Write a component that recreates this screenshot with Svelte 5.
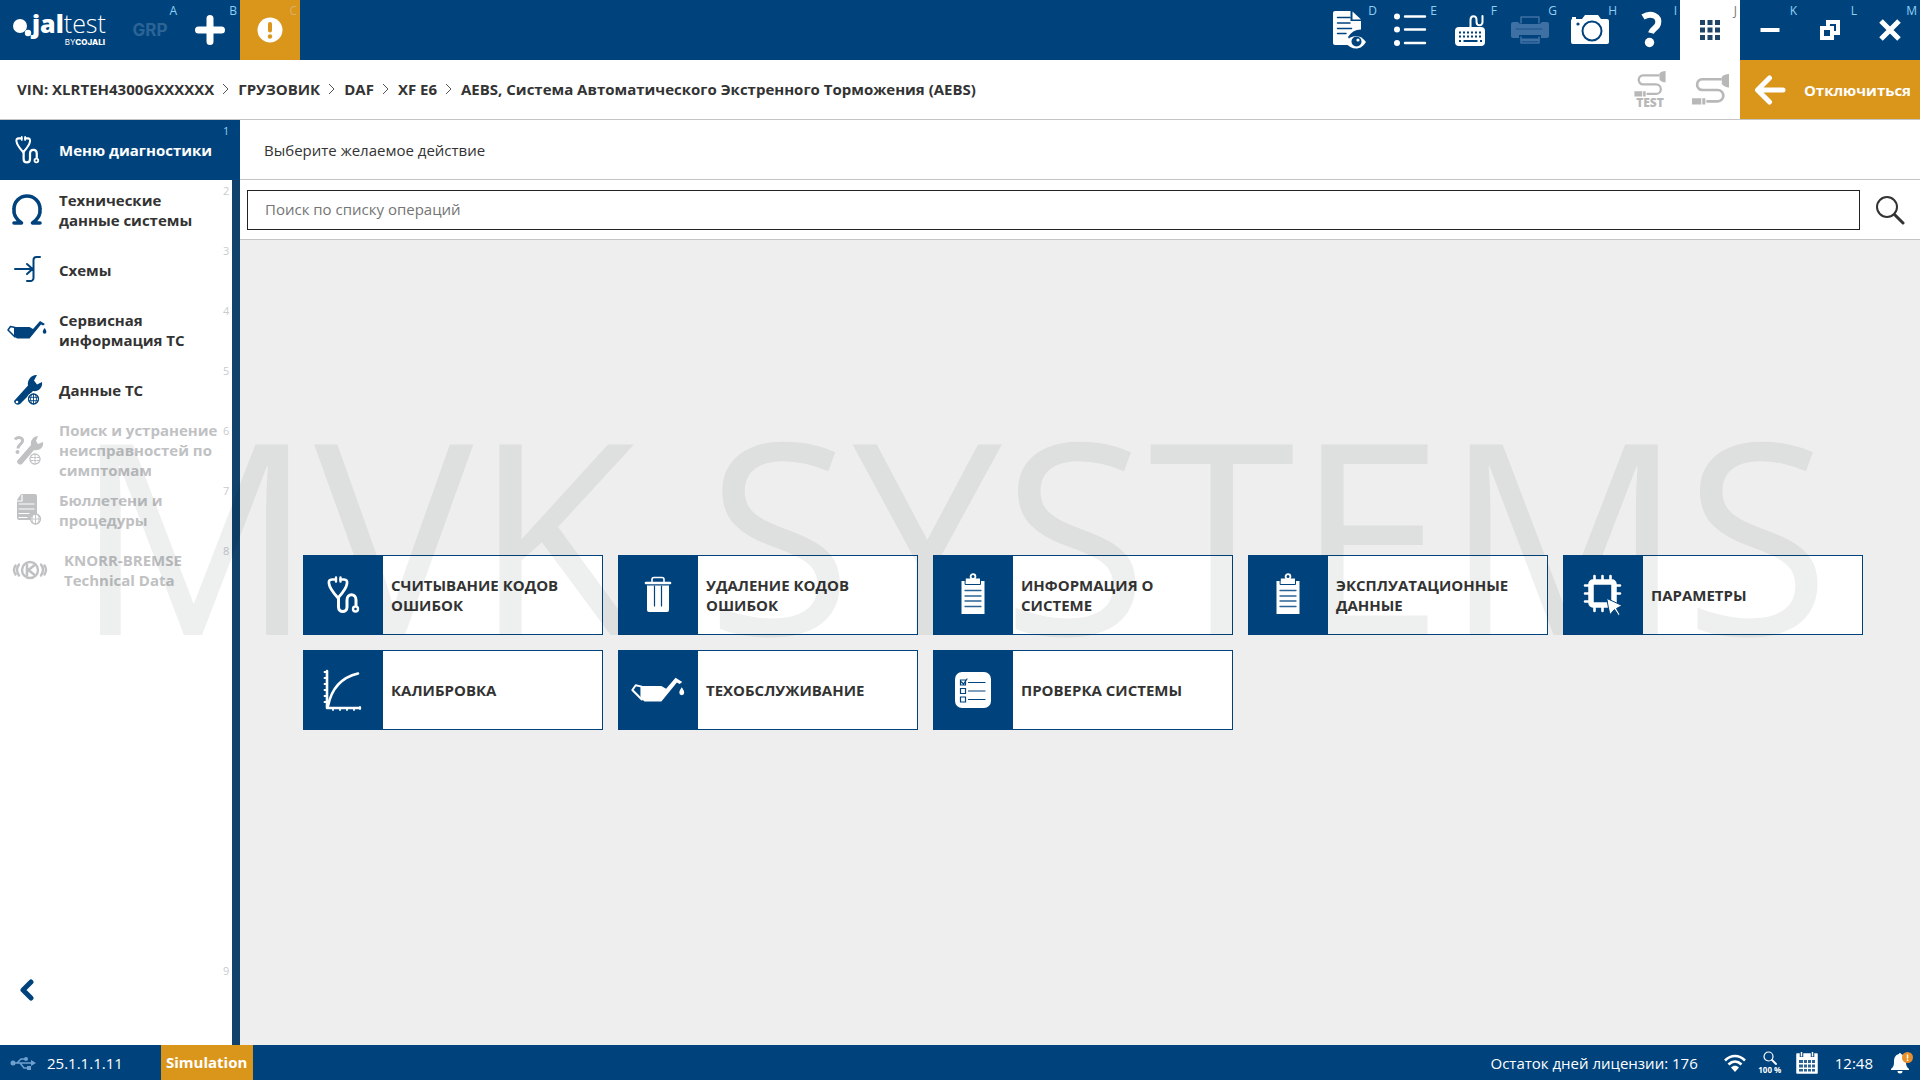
<script>
  const leftTools = [
    { key: 'A', icon: 'grp', label: 'GRP', disabled: true },
    { key: 'B', icon: 'plus', label: 'Добавить' },
    { key: 'C', icon: 'alert', label: 'Предупреждения', tone: 'orange' }
  ];
  const rightTools = [
    { key: 'D', icon: 'report', label: 'Просмотр отчёта' },
    { key: 'E', icon: 'list', label: 'Список' },
    { key: 'F', icon: 'keyboard', label: 'Клавиатура' },
    { key: 'G', icon: 'printer', label: 'Печать', disabled: true },
    { key: 'H', icon: 'camera', label: 'Снимок экрана' },
    { key: 'I', icon: 'help', label: 'Справка' },
    { key: 'J', icon: 'apps', label: 'Приложения', tone: 'white' },
    { key: 'K', icon: 'minimize', label: 'Свернуть' },
    { key: 'L', icon: 'restore', label: 'Восстановить' },
    { key: 'M', icon: 'close', label: 'Закрыть' }
  ];
  const crumbs = [
    'VIN: XLRTEH4300GXXXXXX',
    'ГРУЗОВИК',
    'DAF',
    'XF E6',
    'AEBS, Система Автоматического Экстренного Торможения (AEBS)'
  ];
  const menu = [
    { icon: 'stethoscope', text: 'Меню диагностики', active: true },
    { icon: 'omega', text: 'Технические данные системы' },
    { icon: 'scheme', text: 'Схемы' },
    { icon: 'oil', text: 'Сервисная информация ТС' },
    { icon: 'wrench', text: 'Данные ТС' },
    { icon: 'symptom', text: 'Поиск и устранение неисправностей по симптомам', disabled: true },
    { icon: 'bulletin', text: 'Бюллетени и процедуры', disabled: true },
    { icon: 'knorr', text: 'KNORR-BREMSE Technical Data', disabled: true, indent: true }
  ];
  const actions = [
    { icon: 'stethoscope', text: 'СЧИТЫВАНИЕ КОДОВ ОШИБОК' },
    { icon: 'trash', text: 'УДАЛЕНИЕ КОДОВ ОШИБОК' },
    { icon: 'clipboard', text: 'ИНФОРМАЦИЯ О СИСТЕМЕ' },
    { icon: 'clipboard', text: 'ЭКСПЛУАТАЦИОННЫЕ ДАННЫЕ' },
    { icon: 'chip', text: 'ПАРАМЕТРЫ' },
    { icon: 'curve', text: 'КАЛИБРОВКА' },
    { icon: 'oil', text: 'ТЕХОБСЛУЖИВАНИЕ' },
    { icon: 'checklist', text: 'ПРОВЕРКА СИСТЕМЫ' }
  ];
</script>

{#snippet glyph(name)}
  <svg class="glyph {name}" viewBox="0 0 40 40" aria-hidden="true" fill="none" stroke="currentColor" stroke-linecap="round" stroke-linejoin="round">
    {#if name === 'plus'}
      <path d="M20 8.500v23M8.500 20h23" stroke-width="7" />
    {:else if name === 'alert'}
      <circle cx="20" cy="20" r="12.500" fill="currentColor" stroke="none" />
      <path d="M20 14v6.500" stroke="#da951b" stroke-width="4" />
      <circle cx="20" cy="26.500" r="2.200" fill="#da951b" stroke="none" />
    {:else if name === 'report'}
      <path d="M5 1h15.500v10H31v8.500c-6 0-10 3-13 7.500 2 4 4 6 7 8H5a2 2 0 0 1-2-2V3a2 2 0 0 1 2-2Z" fill="currentColor" stroke="none" />
      <path d="M22.500 1.500 31 9.500h-8.500Z" fill="currentColor" stroke="none" />
      <path d="M7.500 7.500H20M7.500 13H20M7.500 18.500h14M7.500 23.500H16" stroke="#00437c" stroke-width="1.500" />
      <path d="M15.500 32.500c3-4.500 6.500-6.500 10.500-6.500s7 2 10 6c-3 4.500-6 6.500-10 6.500s-7.500-2-10.500-6Z" fill="currentColor" stroke="none" />
      <circle cx="26.500" cy="31.500" r="5" fill="#00437c" stroke="none" />
      <circle cx="28" cy="30" r="1.600" fill="currentColor" stroke="none" />
    {:else if name === 'list'}
      <g fill="currentColor" stroke="none"><circle cx="7" cy="6.500" r="3" /><circle cx="7" cy="19.500" r="3" /><circle cx="7" cy="33" r="3" /></g>
      <path d="M15 6.500h20M15 19.500h20M15 33h20" stroke-width="2.400" />
    {:else if name === 'keyboard'}
      <rect x="5" y="17" width="30" height="19" rx="4" fill="currentColor" stroke="none" />
      <path d="M20.500 17v-7c0-5 6-5 6-.500v2c0 5 6 5 6 .500V6" stroke-width="2" />
      <path d="M9 22.500h23M9 26.500h23" stroke="#00437c" stroke-width="2" stroke-dasharray="2 2" stroke-linecap="butt" />
      <path d="M9 31h2M13.500 31h14M30 31h2" stroke="#00437c" stroke-width="2" stroke-linecap="butt" />
    {:else if name === 'printer'}
      <path d="M11 13V7h18v6M11 27v6h18v-6" stroke-width="1.500" />
      <path d="M3 12h5l2 2h20l2-2h5a2 2 0 0 1 2 2v12a2 2 0 0 1-2 2h-6v-3H9v3H3a2 2 0 0 1-2-2V14a2 2 0 0 1 2-2Z" fill="currentColor" stroke="none" />
      <path d="M12 30h16" stroke-width="3" /><path d="M6 19h26" stroke="#1b528a" stroke-width="1" />
    {:else if name === 'camera'}
      <path d="M2 9V7h4v2h6l3-4h13l3 4h6a2 2 0 0 1 2 2v21a2 2 0 0 1-2 2H3a2 2 0 0 1-2-2V11a2 2 0 0 1 1-2Z" fill="currentColor" stroke="none" />
      <circle cx="22" cy="21" r="9.500" stroke="#00437c" stroke-width="2" />
      <circle cx="8" cy="14" r="1.600" fill="#00437c" stroke="none" />
    {:else if name === 'help'}
      <path d="M13 7c8-5 17-1 15 7-1 4-6 5-7 9" stroke-width="6" stroke-linecap="butt" />
      <circle cx="19.500" cy="32.500" r="4.700" fill="currentColor" stroke="none" />
    {:else if name === 'apps'}
      <path d="M10 10h5v5h-5ZM17.500 10h5v5h-5ZM25 10h5v5h-5ZM10 17.500h5v5h-5ZM17.500 17.500h5v5h-5ZM25 17.500h5v5h-5ZM10 25h5v5h-5ZM17.500 25h5v5h-5ZM25 25h5v5h-5Z" fill="currentColor" stroke="none" />
    {:else if name === 'minimize'}
      <path d="M10.500 20h19" stroke-width="4" stroke-linecap="butt" />
    {:else if name === 'restore'}
      <g stroke-linejoin="miter" stroke-width="4"><path d="M18 15v-3h10v11h-4" /><path d="M12 18h10v10H12Z" /></g>
    {:else if name === 'close'}
      <path d="M11 11l18 18M29 11 11 29" stroke-width="5" stroke-linecap="butt" />
    {:else if name === 'stethoscope'}
      <path d="M12.500 4.500H9c-2.500 0-3.500 1.500-3 4 .5 5 4.500 9.500 9 14.500 4.500-5 8.500-9.500 9-14.500.4-2.500-.6-4-3-4h-3.500" stroke-width="2.700" />
      <path d="M13 2.500v4M17.500 2.500v4" stroke-width="2.400" />
      <path d="M15.500 23v9c0 6 8.500 6 8.500 0v-7c0-7 9-7 9 0v5" stroke-width="3" />
      <circle cx="32.500" cy="34" r="2.500" stroke-width="2.400" />
    {:else if name === 'omega'}
      <path d="M7 33h7.500c-7-5-8-10-7.500-14a13 13 0 0 1 26 0c.5 4-.5 9-7.500 14H33" stroke-width="3.600" />
    {:else if name === 'scheme'}
      <path d="M33 7h-3.500a3 3 0 0 0-3 3v18a3 3 0 0 1-3 3H20M8 19h16M20 14l5.500 5-5.500 5" stroke-width="2" />
    {:else if name === 'oil'}
      <path d="M7 17h15.500l3.500 2L33 11l5 3-2 1.500-2-1L22.500 28.600H10L7 26Z" fill="currentColor" stroke="none" />
      <path d="M8 17.500 3.500 16.500 1 20l7 7" stroke-width="1.500" />
      <path d="M37.600 18c-1 1.500-1.800 2.700-1.800 4a1.800 1.800 0 0 0 3.600 0c0-1.300-.8-2.500-1.800-4Z" fill="currentColor" stroke="none" />
    {:else if name === 'wrench'}
      <path d="M7 31 21 15.500c-1-5 3-11 9-10.500l-3 5.500 3 4 5-2.500c1 6-4 10-9 9L13 34a3.800 3.800 0 0 1-6-3Z" fill="currentColor" stroke="none" />
      <circle cx="10" cy="32" r="1.300" fill="#fff" stroke="none" />
      <circle cx="26.500" cy="29" r="6.500" fill="#fff" stroke="none" />
      <circle cx="26.500" cy="29" r="5" stroke-width="1.300" />
      <path d="M22 27.300h9M22 30.700h9M26.500 24v10M25 24.500c-2 3-2 6 0 9M28 24.500c2 3 2 6 0 9" stroke-width=".9" />
    {:else if name === 'symptom'}
      <path d="M10 31 24 15c-1-5 3-9 7-9l-2 5 2 3 5-2c1 6-4 9-9 8L15 34a3.200 3.200 0 0 1-5-3Z" fill="currentColor" stroke="none" />
      <path d="M8 9.500c2.500-3.500 8-2 7.500 1.500 0 3-4.500 3.500-4.500 7.500" stroke-width="3" stroke-linecap="butt" />
      <circle cx="10.500" cy="22" r="2" fill="currentColor" stroke="none" />
      <circle cx="28" cy="29" r="5" stroke-width="1.300" stroke-dasharray="2 1" />
      <path d="M24 27.500h8M24 30.500h8M28 24v10" stroke-width="1" stroke-dasharray="2 1" />
    {:else if name === 'bulletin'}
      <path d="M14 4h14a2 2 0 0 1 2 2v18c-5 0-7 2-7 6H12a2 2 0 0 1-2-2V10Z" fill="currentColor" stroke="none" />
      <path d="M15 5v6h-5M12 14h15M12 19h15M12 23.500h10M12 27.500h8" stroke="#fff" stroke-width="1.200" />
      <circle cx="28.500" cy="29" r="5" stroke-width="1.300" />
      <path d="M23.500 29h10M28.500 24v10M26 25c-1.500 3-1.500 5 0 8M31 25c1.500 3 1.500 5 0 8" stroke-width=".9" />
    {:else if name === 'knorr'}
      <circle cx="20" cy="20" r="8" stroke-width="2.400" />
      <path d="M17 15v10M24 15.500 18.500 20l5.500 4.500" stroke-width="2.600" />
      <path d="M9 14.500c-2.500 3.500-2.500 7.500 0 11M5.500 15.500c-2 3-2 6 0 9M31 14.500c2.500 3.500 2.500 7.500 0 11M34.500 15.500c2 3 2 6 0 9" stroke-width="2.400" />
    {:else if name === 'trash'}
      <path d="M14 6.500V4.500a2 2 0 0 1 2-2h8a2 2 0 0 1 2 2v2" stroke-width="1.600" />
      <path d="M8 8h24" stroke-width="2.600" />
      <path d="M9 10.500h22V35a2 2 0 0 1-2 2H11a2 2 0 0 1-2-2Z" fill="currentColor" stroke="none" />
      <path d="M16.500 11v20M23.500 11v20" stroke="#00437c" stroke-width="1.200" />
    {:else if name === 'clipboard'}
      <path d="M8.500 6h23v33h-23Z" fill="currentColor" stroke="none" />
      <path d="M12.500 3h15v6.500h-15Z" fill="currentColor" stroke="#00437c" stroke-width="1" />
      <circle cx="20" cy="1.500" r="2.400" stroke-width="1.800" />
      <path d="M12 15.500h16M12 21h16M12 26h16M12 31.500h16" stroke="#2b6394" stroke-width="1.300" />
    {:else if name === 'chip'}
      <rect x="8" y="7" width="23" height="23" rx="2" stroke-width="5.500" />
      <path d="M11.500 1v4M19.500 1v4M27.500 1v4M11.500 32v4M19.500 32v4M2 10.500h4M2 18.500h4M2 26.500h4M33 10.500h4M33 18.500h4" stroke-width="2.600" />
      <path d="M24 23.500l15 7-5.500 3 3.500 6-1.500 1-4-6-4.500 5Z" fill="currentColor" stroke="#00437c" stroke-width="1" />
    {:else if name === 'curve'}
      <path d="M4 1v37h33" stroke-width="2.600" />
      <path d="M1.500 2h2M1.500 8h2M1.500 14h2M1.500 20h2M1.500 26h2M1.500 32h2M10 38v2M17 38v2M24 38v2M31 38v2M37 37v2" stroke-width="1.800" />
      <path d="M5 36C8 21 16 8 35 3.500" stroke-width="2.600" />
    {:else if name === 'checklist'}
      <rect x="2" y="2" width="36" height="36" rx="7" fill="currentColor" stroke="none" />
      <g stroke="#00437c" stroke-width="1.200" stroke-linejoin="miter"><path d="M7.500 10h5v5h-5ZM7.500 18.500h5v5h-5ZM7.500 27h5v5h-5ZM8.500 12l2 2 3.500-5" /><path d="M15.500 12.500H32M15.500 21H32M15.500 29.500H32" /></g>
    {/if}
  </svg>
{/snippet}

{#snippet tool(item)}
  <button class="tool {item.tone ?? ''}" class:off={item.disabled} aria-label={item.label} aria-keyshortcuts={item.key}>
    {#if item.icon === 'grp'}<b class="grp">GRP</b>{:else}{@render glyph(item.icon)}{/if}
    <span class="key">{item.key}</span>
  </button>
{/snippet}

{#snippet cable()}
  <path d="M29 5H10a5 5 0 0 0-5 5.500a5 5 0 0 0 5 5h15a5.500 5.500 0 0 1 0 11H14" stroke="currentColor" stroke-width="2.600" fill="none" />
  <path d="M29 2.500c2-1.500 4-2.500 7-2.500v13c-3 0-5-1-7-3ZM0 23.500h9v6H0ZM10 23.500h3v6h-3Z" fill="currentColor" />
{/snippet}

<div class="app">
  <header class="topbar">
    <svg class="logo" viewBox="0 0 120 60" role="img" aria-label="jaltest by cojali">
      <circle cx="20" cy="26" r="7" /><circle cx="28" cy="33" r="3.200" />
      <text x="32" y="33" class="brand"><tspan class="bold">jal</tspan><tspan class="light">test</tspan></text>
      <text x="105" y="45" class="by" text-anchor="end">BY<tspan class="bold">COJALI</tspan></text>
    </svg>
    {#each leftTools as item}{@render tool(item)}{/each}
    <div class="spacer"></div>
    {#each rightTools as item}{@render tool(item)}{/each}
  </header>

  <div class="pathbar">
    <nav class="crumbs" aria-label="Путь">
      {#each crumbs as crumb, i}
        {#if i > 0}
          <svg class="sep" viewBox="0 0 8 12" aria-hidden="true"><path d="M1 1l5 5-5 5" fill="none" stroke="#555" /></svg>
        {/if}
        <span>{crumb}</span>
      {/each}
    </nav>
    <button class="link-tool column" aria-label="Проверка связи">
      <svg viewBox="0 0 36 30" width="32" height="26">{@render cable()}</svg>
      <b class="test">TEST</b>
    </button>
    <button class="link-tool" aria-label="Связь">
      <svg viewBox="0 0 36 30" width="37" height="31">{@render cable()}</svg>
    </button>
    <button class="disconnect">
      <svg viewBox="0 0 32 30" width="32" height="30" aria-hidden="true"><path d="M29 15H4M15.500 3 3.500 15l12 12" fill="none" stroke="#fff" stroke-width="5" stroke-linecap="round" stroke-linejoin="round" /></svg>
      <span>Отключиться</span>
    </button>
  </div>

  <div class="body">
    <aside class="sidebar">
      <nav aria-label="Разделы">
        {#each menu as item, i}
          <button class="item" class:active={item.active} class:muted={item.disabled} class:indent={item.indent}>
            <span class="pic">{@render glyph(item.icon)}</span>
            <span class="name">{item.text}</span>
            <span class="num">{i + 1}</span>
          </button>
        {/each}
      </nav>
      <button class="item collapse" aria-label="Свернуть меню">
        <svg viewBox="0 0 14 22" width="14" height="22" aria-hidden="true"><path d="M11 3 3 11l8 8" fill="none" stroke="#00437c" stroke-width="5" stroke-linecap="round" stroke-linejoin="round" /></svg>
        <span class="num">9</span>
      </button>
    </aside>

    <main>
      <h1>Выберите желаемое действие</h1>
      <form class="search" role="search">
        <input type="search" placeholder="Поиск по списку операций" aria-label="Поиск по списку операций" />
        <button type="button" aria-label="Найти">
          <svg viewBox="0 0 30 30" width="30" height="30" fill="none" stroke="#333" stroke-linecap="round"><circle cx="12" cy="12" r="10" stroke-width="2" /><path d="M19.500 19.500 28 28" stroke-width="3" /></svg>
        </button>
      </form>
      <section class="stage">
        <div class="cards">
          {#each actions as action}
            <button class="card">
              <span class="tile">{@render glyph(action.icon)}</span>
              <span class="caption">{action.text}</span>
            </button>
          {/each}
        </div>
      </section>
    </main>
  </div>

  <footer>
    <svg class="usb" viewBox="0 0 26 14" width="26" height="14" aria-hidden="true"><g fill="none" stroke="#6fa0cf" stroke-width="1.500"><path d="M3 7h20M7 7l4-4h4M10 7l4 5h4" /></g><g fill="#6fa0cf"><circle cx="3" cy="7" r="2.500" /><circle cx="16" cy="3" r="2" /><path d="M17 10h4v4h-4ZM21 4l5 3-5 3Z" /></g></svg>
    <span class="version">25.1.1.1.11</span>
    <strong class="mode">Simulation</strong>
    <div class="spacer"></div>
    <span class="license">Остаток дней лицензии: 176</span>
    <svg class="wifi" viewBox="0 0 22 18" width="22" height="18" aria-hidden="true"><g fill="none" stroke="#fff" stroke-width="2.600"><path d="M1 6.500C7 .5 15 .5 21 6.500M4.500 10.500c4-4 9-4 13 0" /></g><path d="M7 13.500c2.500-2.300 5.500-2.300 8 0L11 18Z" fill="#fff" /></svg>
    <span class="zoom">
      <svg viewBox="0 0 14 14" width="14" height="14" fill="none" stroke="#fff" stroke-linecap="round" aria-hidden="true"><circle cx="5.500" cy="5.500" r="4.500" stroke-width="1.200" /><path d="M9 9l4 4" stroke-width="1.800" /></svg>
      <b>100 %</b>
    </span>
    <svg class="calendar" viewBox="0 0 22 22" width="22" height="22" aria-hidden="true"><path d="M1 2h20v19H1Z" fill="#fff" stroke="#fff" stroke-linejoin="round" stroke-width="1.500" /><path d="M3 8h4v3H3ZM8 8h3v3H8ZM12 8h3v3h-3ZM16 8h3v3h-3ZM3 12.500h4v3H3ZM8 12.500h3v3H8ZM12 12.500h3v3h-3ZM16 12.500h3v3h-3ZM3 17h4v2.500H3ZM8 17h3v2.500H8ZM12 17h3v2.500h-3ZM16 17h3v2.500h-3Z" fill="#2b6394" /><path d="M5.500 0v5M16.500 0v5" stroke="#00437c" stroke-width="3.500" /><path d="M5.500 0v4.500M16.500 0v4.500" stroke="#fff" stroke-width="1.500" /></svg>
    <time>12:48</time>
    <svg class="bell" viewBox="0 0 24 22" width="24" height="22" aria-hidden="true"><path d="M9 2c-4 1-5 4-5 8s-1 5-3 7v1h18v-1c-2-2-3-3-3-7s-2-7-5-8a1 1 0 0 0-2 0ZM7.500 19a2.500 2.500 0 0 0 5 0Z" fill="#fff" /><circle cx="17.500" cy="5.500" r="5.500" fill="#e8912a" /><path d="M17.500 2.500v4M17.500 7.500v1.500" stroke="#fff" stroke-width="1.500" /></svg>
  </footer>

  <div class="watermark" aria-hidden="true">MVK SYSTEMS</div>
</div>

<style>
  :global(body) {
    margin: 0;
    color: #333;
    font-family: 'Open Sans', 'Noto Sans', sans-serif;
    font-size: 15px;
    line-height: 20px;
  }
  .app {
    position: relative;
    display: flex;
    flex-direction: column;
    min-height: 100vh;
    overflow: hidden;
    background: #fff;
  }
  button {
    margin: 0;
    padding: 0;
    border: 0;
    background: none;
    color: inherit;
    font: inherit;
    text-align: left;
    cursor: pointer;
  }
  .spacer {
    flex: 1;
  }
  .glyph {
    width: 40px;
    height: 40px;
    overflow: visible;
  }

  .topbar {
    display: flex;
    height: 60px;
    background: #00437c;
    color: #fff;
  }
  .logo {
    width: 120px;
    height: 60px;
    fill: #fff;
  }
  .brand {
    font-size: 25px;
  }
  .bold {
    font-weight: 800;
  }
  .light {
    font-weight: 300;
  }
  .by {
    font-family: Inter, sans-serif;
    font-size: 8px;
  }
  .tool {
    position: relative;
    display: flex;
    align-items: center;
    justify-content: center;
    width: 60px;
    height: 60px;
  }
  .tool.off {
    color: #3f70a4;
  }
  .tool.orange {
    background: #da951b;
  }
  .tool.white {
    background: #fff;
    color: #1f4468;
  }
  .grp {
    color: #2c6496;
    font-family: Inter, sans-serif;
    font-size: 17px;
  }
  .key {
    position: absolute;
    top: 3px;
    right: 3px;
    color: #8fd0f5;
    font-size: 12px;
    line-height: 16px;
  }
  .orange .key {
    color: #d9b06a;
  }
  .white .key {
    color: #777;
  }

  .pathbar {
    display: flex;
    align-items: center;
    height: 59px;
    border-bottom: 1px solid #c4c4c4;
  }
  .crumbs {
    display: flex;
    flex: 1;
    align-items: center;
    gap: 8px;
    padding: 0 0 2px 17px;
    font-weight: 700;
  }
  .sep {
    width: 8px;
    height: 12px;
  }
  .link-tool {
    display: flex;
    align-items: center;
    justify-content: center;
    width: 60px;
    height: 59px;
    color: #b8b8b8;
  }
  .column {
    flex-direction: column;
  }
  .test {
    font-size: 12px;
    font-weight: 800;
    line-height: 12px;
  }
  .disconnect {
    display: flex;
    align-items: center;
    justify-content: space-between;
    width: 180px;
    height: 59px;
    padding: 0 9px 0 14px;
    box-sizing: border-box;
    background: #da951b;
    color: #fff;
    font-weight: 700;
  }

  .body {
    display: flex;
    flex: 1;
  }
  .sidebar {
    display: flex;
    flex-direction: column;
    justify-content: space-between;
    width: 240px;
    box-sizing: border-box;
    border-right: 8px solid #11426c;
    padding-bottom: 25px;
  }
  .item {
    position: relative;
    display: flex;
    align-items: center;
    width: 232px;
    height: 60px;
    font-weight: 700;
  }
  .item.active {
    width: 240px;
    background: #00437c;
    color: #fff;
  }
  .pic {
    display: flex;
    flex: none;
    justify-content: center;
    width: 54px;
    margin-right: 5px;
    color: #00437c;
  }
  .pic .stethoscope {
    width: 30px;
    height: 30px;
  }
  .active .pic {
    color: #fff;
  }
  .name {
    width: 165px;
  }
  .muted,
  .muted .pic {
    color: #bfc1c3;
  }
  .indent .pic {
    width: 59px;
  }
  .num {
    position: absolute;
    top: 3px;
    left: 223px;
    color: #c8ccd0;
    font-size: 11px;
    font-weight: 400;
    line-height: 16px;
  }
  .active .num {
    color: #8fd0f5;
  }
  .collapse {
    padding-left: 20px;
    box-sizing: border-box;
  }

  main {
    display: flex;
    flex: 1;
    flex-direction: column;
    min-width: 0;
  }
  h1 {
    margin: 0;
    padding: 20px 24px 19px;
    border-bottom: 1px solid #c4c4c4;
    font-size: 15px;
    font-weight: 400;
  }
  .search {
    display: flex;
    align-items: center;
    gap: 15px;
    height: 59px;
    padding: 0 15px 0 7px;
    border-bottom: 1px solid #c4c4c4;
  }
  .search input {
    flex: 1;
    height: 40px;
    box-sizing: border-box;
    padding: 0 17px 2px;
    border: 1px solid #222;
    border-radius: 0;
    background: #fff;
    color: #333;
    font: inherit;
  }
  .search input::placeholder {
    color: #757575;
  }
  .search button {
    display: flex;
  }
  .stage {
    display: flex;
    flex: 1;
    align-items: center;
    justify-content: center;
    padding-left: 6px;
    background: #eee;
  }
  .cards {
    display: grid;
    grid-template-columns: repeat(5, 300px);
    gap: 15px;
  }
  .card {
    display: flex;
    align-items: center;
    height: 80px;
    border: 1px solid #00437c;
    background: #fff;
    font-weight: 700;
  }
  .tile {
    position: relative;
    z-index: 2;
    display: flex;
    flex: none;
    align-items: center;
    justify-content: center;
    width: 79px;
    height: 78px;
    padding-right: 2px;
    box-sizing: border-box;
    background: #00437c;
    color: #fff;
  }
  .tile .oil {
    flex: none;
    width: 54px;
    height: 54px;
  }
  .caption {
    padding: 0 24px 0 8px;
  }

  footer {
    display: flex;
    align-items: center;
    height: 35px;
    background: #00437c;
    color: #fff;
  }
  .usb {
    margin: 0 11px 0 10px;
  }
  .version {
    width: 114px;
  }
  .mode {
    padding: 0 6px 0 5px;
    background: #da951b;
    line-height: 35px;
  }
  .license {
    margin-right: 26px;
  }
  .zoom {
    display: flex;
    flex-direction: column;
    align-items: center;
    width: 22px;
    margin: 0 15px 0 13px;
    font-size: 8px;
    line-height: 10px;
    white-space: nowrap;
  }
  time {
    margin: 0 17px;
  }
  .bell {
    margin-right: 6px;
  }

  .watermark {
    position: absolute;
    z-index: 1;
    top: 351px;
    left: 74px;
    color: rgba(0, 20, 14, 0.065);
    font-size: 267px;
    line-height: 362px;
    white-space: nowrap;
    pointer-events: none;
  }
</style>
